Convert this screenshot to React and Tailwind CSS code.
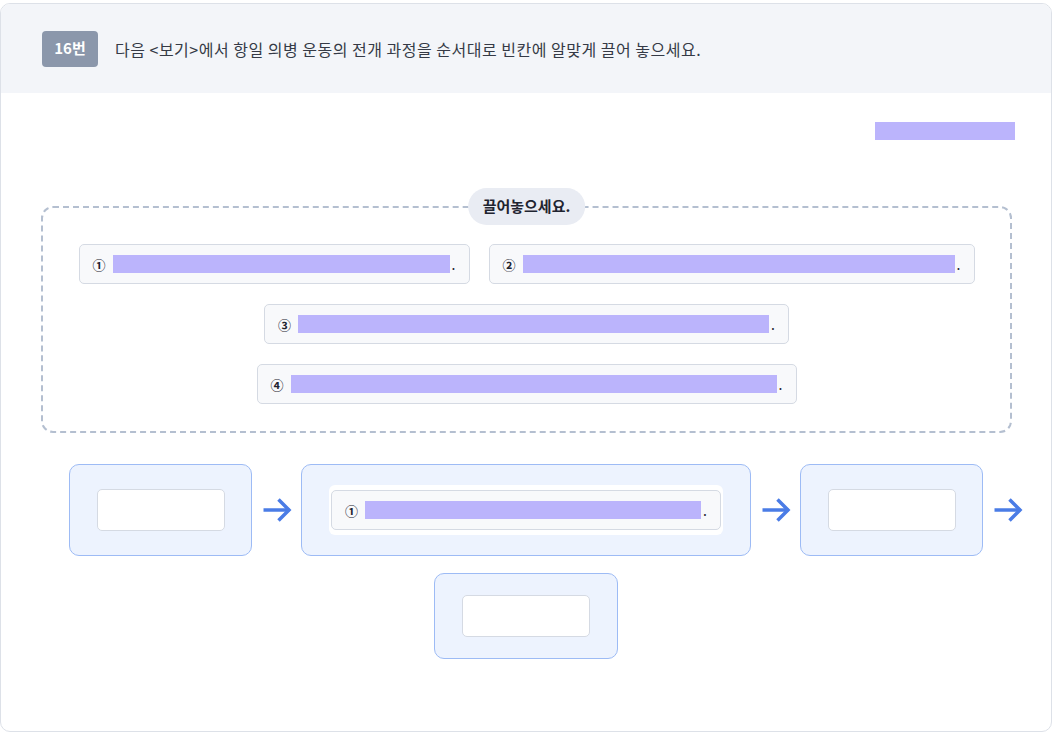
import React from "react";

const options = [
  { no: "①", w: "w-[391px]" },
  { no: "②", w: "w-[486px]" },
  { no: "③", w: "w-[525px]" },
  { no: "④", w: "w-[540px]" },
];

const OptionCard = ({ no, w }) => (
  <div className={`${w} h-[40px] flex items-center px-[13px] bg-[#f8f9fb] border border-[#d5dae3] rounded-[5px] text-[#1f2430]`}>
    <span className="text-[13px] font-bold leading-none mr-[7px]">{no}</span>
    <span className="flex-1 h-[18px] bg-[#bbb4fc]" />
    <span className="text-[14px] leading-none ml-[2px] self-end mb-[12px]">.</span>
  </div>
);

const Arrow = () => (
  <div className="flex items-center ml-[11px] mr-[9px]">
    <svg width="29" height="26" viewBox="0 0 29 26" fill="none">
      <path d="M0.5 13H26.5" stroke="#4a7ce6" strokeWidth="3.5" />
      <path d="M15.5 2.5L26 13L15.5 23.5" stroke="#4a7ce6" strokeWidth="3.5" />
    </svg>
  </div>
);

const EmptySlot = () => (
  <div className="w-[128px] h-[42px] bg-white border border-[#d5dae3] rounded-[5px]" />
);

const DropBox = ({ children, className = "" }) => (
  <div className={`flex items-center justify-center bg-[#edf3fe] border border-[#9dbbf5] rounded-[10px] ${className}`}>
    {children}
  </div>
);

export default function App() {
  return (
    <div
      className="w-[1054px] h-[734px] bg-white pt-[3px] overflow-hidden"
      style={{ fontFamily: '"Noto Sans CJK KR", "Noto Sans", sans-serif' }}
    >
      <div className="relative w-[1052px] h-[729px] border border-[#dde1e8] rounded-[10px] overflow-hidden">
        {/* header */}
        <div className="h-[89px] bg-[#f3f5f9] flex items-center pl-[41px]">
          <div className="w-[56px] h-[36px] rounded-[4px] bg-[#8b97ab] flex items-center justify-center text-white text-[15px] font-bold">
            16번
          </div>
          <p className="ml-[17px] text-[16px] tracking-[0.5px] text-[#353a46]">
            다음 &lt;보기&gt;에서 항일 의병 운동의 전개 과정을 순서대로 빈칸에 알맞게 끌어 놓으세요.
          </p>
        </div>

        {/* top right placeholder */}
        <div className="flex justify-end pr-[36px] pt-[29px]">
          <div className="w-[140px] h-[18px] bg-[#bbb4fc]" />
        </div>

        {/* drag source */}
        <div className="relative ml-[40px] mr-[39px] mt-[66px] border-2 border-dashed border-[#b4bfd0] rounded-[12px] pt-[36px] pb-[27px]">
          <div className="absolute left-1/2 -translate-x-1/2 -top-[20px] h-[37px] px-[15px] rounded-full bg-[#e9ecf3] flex items-center text-[15px] font-bold text-[#1f2430]">
            끌어놓으세요.
          </div>
          <div className="flex flex-wrap justify-center gap-x-[19px] gap-y-[20px]">
            {options.map((o) => (
              <OptionCard key={o.no} {...o} />
            ))}
          </div>
        </div>

        {/* drop targets */}
        <div className="mt-[31px] flex flex-col gap-[17px]">
          <div className="flex items-stretch pl-[68px]">
            <DropBox className="w-[183px] py-[21px]">
              <EmptySlot />
            </DropBox>
            <Arrow />
            <DropBox className="w-[450px] py-[20px]">
              <div className="bg-white rounded-[6px] px-[2px] py-[5px]">
                <OptionCard no="①" w="w-[390px]" />
              </div>
            </DropBox>
            <Arrow />
            <DropBox className="w-[183px] py-[21px]">
              <EmptySlot />
            </DropBox>
            <Arrow />
          </div>
          <div className="flex justify-center">
            <DropBox className="w-[184px] h-[86px]">
              <EmptySlot />
            </DropBox>
          </div>
        </div>
      </div>
    </div>
  );
}
